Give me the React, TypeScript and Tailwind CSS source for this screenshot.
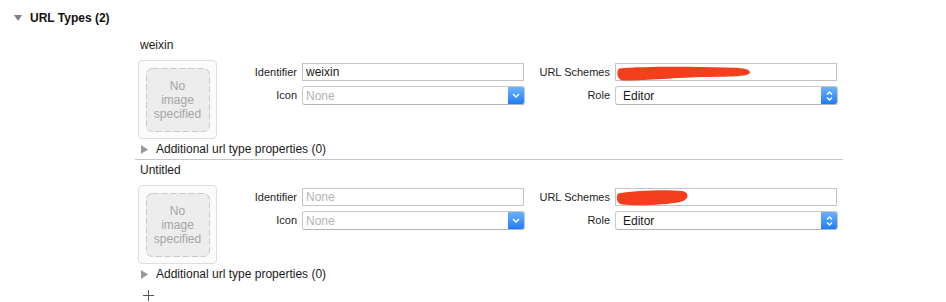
import React from "react";

function Scribble({ variant }: { variant: 1 | 2 }) {
  if (variant === 1) {
    return (
      <svg className="absolute left-0 top-0 pointer-events-none" width="140" height="18" viewBox="0 0 140 18">
        <path
          d="M3 4.5 C25 2.5, 70 2.5, 110 3.5 C125 3.8, 134 4.5, 134 8.5 C134 12.5, 118 12.5, 90 13 C60 13.5, 25 17, 7 16.5 C1 16, 0 7.5, 3 4.5 Z"
          fill="#f43f1d"
        />
      </svg>
    );
  }
  return (
    <svg className="absolute left-0 top-0 pointer-events-none" width="80" height="18" viewBox="0 0 80 18">
      <path
        d="M2 4.5 C20 1.5, 50 0.5, 66 2 C73.5 3, 74 11, 64 13 C50 16, 22 17, 6 15.5 C0 14.5, 0 7, 2 4.5 Z"
        fill="#f43f1d"
      />
    </svg>
  );
}

function TextField({ value, placeholder, scribble }: { value?: string; placeholder?: string; scribble?: 1 | 2 }) {
  return (
    <div className="relative w-[222px] h-[18px] border border-[#c4c4c4] bg-white px-[3px] flex items-center text-[12px] leading-[16px]">
      {value ? (
        <span className="text-[#1a1a1a]">{value}</span>
      ) : placeholder ? (
        <span className="text-[#b4b4b4]">{placeholder}</span>
      ) : null}
      {scribble ? <Scribble variant={scribble} /> : null}
    </div>
  );
}

function Popup({ value, placeholder, updown }: { value?: string; placeholder?: string; updown?: boolean }) {
  return (
    <div className="w-[223px] h-[19px] flex rounded-[3px] border border-[#c9c9c9] border-b-[#b3b3b3] bg-white overflow-hidden">
      <div className="flex-1 flex items-center px-[3px] text-[12px] leading-[16px]">
        {value ? (
          <span className="text-[#1a1a1a] pl-[4px]">{value}</span>
        ) : (
          <span className="text-[#b4b4b4]">{placeholder}</span>
        )}
      </div>
      <div className="w-[16px] h-full bg-gradient-to-b from-[#6cb1fb] to-[#1b7cfa] flex items-center justify-center">
        {updown ? (
          <svg width="7" height="10" viewBox="0 0 7 10">
            <path d="M1 3.5 L3.5 1 L6 3.5" stroke="white" strokeWidth="1.4" fill="none" />
            <path d="M1 6.5 L3.5 9 L6 6.5" stroke="white" strokeWidth="1.4" fill="none" />
          </svg>
        ) : (
          <svg width="8" height="5" viewBox="0 0 8 5">
            <path d="M1 1 L4 4 L7 1" stroke="white" strokeWidth="1.5" fill="none" />
          </svg>
        )}
      </div>
    </div>
  );
}

function ImageWell() {
  return (
    <div className="w-[79px] h-[79px] rounded-[4px] border border-[#dedede] bg-[#fbfbfb] flex items-center justify-center">
      <div className="relative w-[64px] h-[64px] rounded-[6px] bg-[#ededed] flex items-center justify-center">
        <svg className="absolute inset-0" width="64" height="64" viewBox="0 0 64 64">
          <rect x="0.5" y="0.5" width="63" height="63" rx="6" ry="6" fill="none" stroke="#c9c9c9" strokeDasharray="6 3" />
        </svg>
        <div className="relative text-center text-[12px] leading-[14px] text-[#a5a5a5]">
          No
          <br />
          image
          <br />
          specified
        </div>
      </div>
    </div>
  );
}

function Label({ children, w }: { children: React.ReactNode; w: string }) {
  return <div className={`${w} pr-[5px] text-right text-[11px] text-[#222]`}>{children}</div>;
}

function Disclosure() {
  return (
    <div className="h-[20px] flex items-center pl-[6px] gap-[8px]">
      <svg width="7" height="9" viewBox="0 0 7 9">
        <path d="M0 0 L7 4.5 L0 9 Z" fill="#999" />
      </svg>
      <span className="text-[12px] text-[#1a1a1a]">Additional url type properties (0)</span>
    </div>
  );
}

function Entry({ title, identifier, scribble }: { title: string; identifier?: string; scribble: 1 | 2 }) {
  return (
    <div>
      <div className="h-[19px] flex items-center pl-[5px] text-[12px] text-[#1a1a1a]">{title}</div>
      <div className="mt-[6px] flex pl-[3px]">
        <ImageWell />
        <div className="mt-[3px] flex flex-col gap-[5px]">
          <div className="flex items-center h-[18px]">
            <Label w="w-[85px]">Identifier</Label>
            <TextField value={identifier} placeholder="None" />
            <Label w="w-[91px]">URL Schemes</Label>
            <TextField scribble={scribble} />
          </div>
          <div className="flex items-center h-[19px]">
            <Label w="w-[85px]">Icon</Label>
            <Popup placeholder="None" />
            <Label w="w-[90px]">Role</Label>
            <Popup value="Editor" updown />
          </div>
        </div>
      </div>
      <Disclosure />
    </div>
  );
}

export default function App() {
  return (
    <div className="w-[946px] h-[302px] bg-white overflow-hidden font-['Liberation_Sans',Arial,sans-serif]">
      <div className="h-[35px] flex items-center pl-[14px] gap-[8px]">
        <svg width="8" height="6" viewBox="0 0 8 6">
          <path d="M0 0 L8 0 L4 6 Z" fill="#808080" />
        </svg>
        <span className="text-[12px] font-bold text-[#111]">URL Types (2)</span>
      </div>
      <div className="ml-[135px] w-[708px]">
        <Entry title="weixin" identifier="weixin" scribble={1} />
        <div className="h-px bg-[#c6c6c6]" />
        <Entry title="Untitled" scribble={2} />
      </div>
      <div className="h-[22px] flex items-center pl-[143px]">
        <svg width="11" height="11" viewBox="0 0 11 11">
          <path d="M5.5 0 V11 M0 5.5 H11" stroke="#555" strokeWidth="1" />
        </svg>
      </div>
    </div>
  );
}
